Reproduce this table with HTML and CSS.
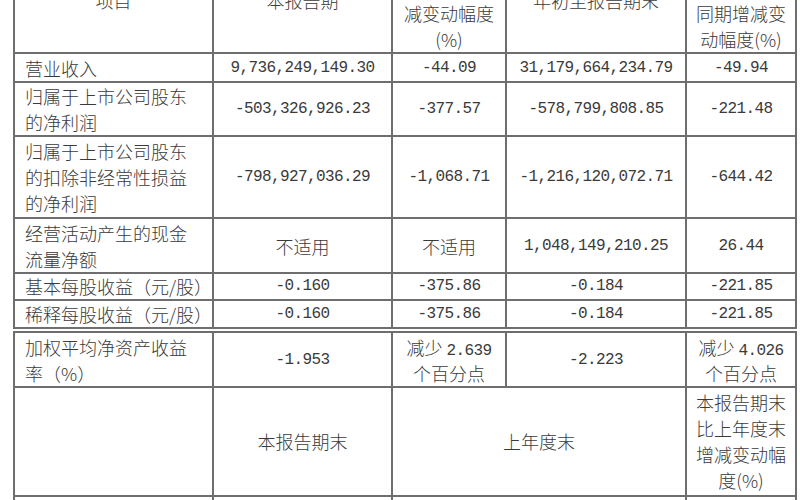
FILE: index.html
```html
<!DOCTYPE html>
<html lang="zh-CN">
<head>
<meta charset="utf-8">
<title>主要会计数据和财务指标</title>
<link rel="stylesheet" href="styles.css">
</head>
<body>
<div class="page">
  <table class="fin fin-top">
    <colgroup>
      <col class="c1"><col class="c2"><col class="c3"><col class="c4"><col class="c5">
    </colgroup>
    <tr class="r-head">
      <td class="ctr">项目</td>
      <td class="ctr">本报告期</td>
      <td class="ctr">本报告期比<br>上年同期增<br>减变动幅度<br>(%)</td>
      <td class="ctr">年初至报告期末</td>
      <td class="ctr">年初至报告<br>期末比上年<br>同期增减变<br>动幅度(%)</td>
    </tr>
    <tr class="r1">
      <td class="lbl">营业收入</td>
      <td class="num">9,736,249,149.30</td>
      <td class="num">-44.09</td>
      <td class="num">31,179,664,234.79</td>
      <td class="num">-49.94</td>
    </tr>
    <tr class="r2">
      <td class="lbl">归属于上市公司股东<br>的净利润</td>
      <td class="num">-503,326,926.23</td>
      <td class="num">-377.57</td>
      <td class="num">-578,799,808.85</td>
      <td class="num">-221.48</td>
    </tr>
    <tr class="r3">
      <td class="lbl">归属于上市公司股东<br>的扣除非经常性损益<br>的净利润</td>
      <td class="num">-798,927,036.29</td>
      <td class="num">-1,068.71</td>
      <td class="num">-1,216,120,072.71</td>
      <td class="num">-644.42</td>
    </tr>
    <tr class="r2b">
      <td class="lbl">经营活动产生的现金<br>流量净额</td>
      <td class="ctr">不适用</td>
      <td class="ctr">不适用</td>
      <td class="num">1,048,149,210.25</td>
      <td class="num">26.44</td>
    </tr>
    <tr class="r1a">
      <td class="lbl">基本每股收益（元/股）</td>
      <td class="num">-0.160</td>
      <td class="num">-375.86</td>
      <td class="num">-0.184</td>
      <td class="num">-221.85</td>
    </tr>
    <tr class="r1b">
      <td class="lbl">稀释每股收益（元/股）</td>
      <td class="num">-0.160</td>
      <td class="num">-375.86</td>
      <td class="num">-0.184</td>
      <td class="num">-221.85</td>
    </tr>
  </table>

  <table class="fin fin-bottom">
    <colgroup>
      <col class="c1"><col class="c2"><col class="c3"><col class="c4"><col class="c5">
    </colgroup>
    <tr class="r2b">
      <td class="lbl">加权平均净资产收益<br>率（%）</td>
      <td class="num">-1.953</td>
      <td class="ctr">减少 <span class="dig">2.639</span><br>个百分点</td>
      <td class="num">-2.223</td>
      <td class="ctr">减少 <span class="dig">4.026</span><br>个百分点</td>
    </tr>
    <tr class="r4">
      <td></td>
      <td class="ctr">本报告期末</td>
      <td class="ctr" colspan="2">上年度末</td>
      <td class="ctr">本报告期末<br>比上年度末<br>增减变动幅<br>度(%)</td>
    </tr>
    <tr class="r1">
      <td class="lbl">总资产</td>
      <td class="num">&nbsp;</td>
      <td class="num" colspan="2">&nbsp;</td>
      <td class="num">&nbsp;</td>
    </tr>
  </table>
</div>
</body>
</html>
```

FILE: styles.css
```css
html, body {
  margin: 0;
  padding: 0;
  background: #ffffff;
}

body {
  width: 800px;
  height: 500px;
  overflow: hidden;
  font-family: "Noto Sans CJK SC", "Noto Sans", sans-serif;
  font-weight: 300;
  color: #3a3a3a;
}

.page {
  padding-left: 13px;
}

.fin {
  border-collapse: collapse;
  table-layout: fixed;
  width: 782px;
  font-size: 18px;
  line-height: 26px;
}

.fin-top {
  margin-top: -55px;
}

.fin-bottom {
  margin-top: 2px;
}

.c1 { width: 199px; }
.c2 { width: 179px; }
.c3 { width: 114px; }
.c4 { width: 180px; }
.c5 { width: 110px; }

.fin td {
  border: 2px solid #6e6e6e;
  padding: 0;
  vertical-align: middle;
  white-space: nowrap;
  overflow: hidden;
}

.fin td.lbl {
  text-align: left;
  padding-left: 10px;
}

.ctr {
  text-align: center;
}

.num {
  text-align: center;
  font-family: "Liberation Mono", "DejaVu Sans Mono", monospace;
  font-weight: 400;
  font-size: 16px;
  letter-spacing: -0.6px;
}

.dig {
  font-family: "Liberation Mono", "DejaVu Sans Mono", monospace;
  font-weight: 400;
  font-size: 16px;
  letter-spacing: -0.6px;
  line-height: 0;
}

/* row pitches: content + padding + one 2px rule */
.r-head td { padding-top: 1px; }
.r1 td { padding-top: 1px; }
.r1a td { line-height: 25px; }
.r2b td { padding-top: 1px; }
.r3 td { padding-top: 1px; padding-bottom: 1px; }
.r4 td { padding-top: 1px; padding-bottom: 2px; }
```
